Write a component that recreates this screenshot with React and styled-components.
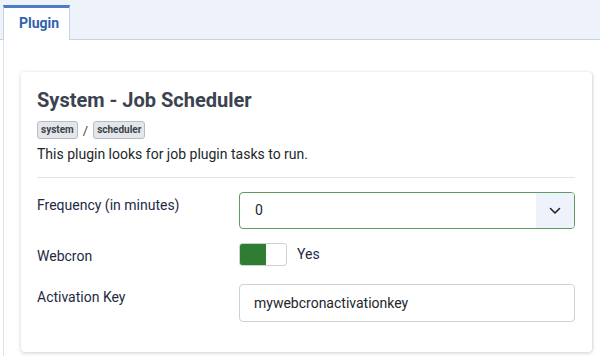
import styled, { createGlobalStyle } from "styled-components";

const GlobalStyle = createGlobalStyle`
  body {
    margin: 0;
    background: #fff;
    font-family: Roboto, "Liberation Sans", sans-serif;
  }
`;

function Chevron() {
  return (
    <svg width="12" height="8" viewBox="0 0 12 8" aria-hidden="true">
      <path d="M1.5 1.5 L6 6 L10.5 1.5" fill="none" stroke="#22262a" strokeWidth="1.6" strokeLinecap="round" strokeLinejoin="round" />
    </svg>
  );
}

export default function App() {
  return (
    <>
      <GlobalStyle />
      <TabBar>
        <Tab>Plugin</Tab>
      </TabBar>
      <Panel>
        <Card>
          <Title>System - Job Scheduler</Title>
          <Badges>
            <Badge>system</Badge>
            <Slash>/</Slash>
            <Badge>scheduler</Badge>
          </Badges>
          <Description>This plugin looks for job plugin tasks to run.</Description>
          <Divider />
          <Form>
            <Row>
              <Label>Frequency (in minutes)</Label>
              <Select $valid>
                <SelectValue>0</SelectValue>
                <SelectArrow>
                  <Chevron />
                </SelectArrow>
              </Select>
            </Row>
            <Row>
              <Label>Webcron</Label>
              <SwitchWrap>
                <Switch>
                  <SwitchOn />
                </Switch>
                <SwitchText>Yes</SwitchText>
              </SwitchWrap>
            </Row>
            <Row>
              <Label>Activation Key</Label>
              <Input>mywebcronactivationkey</Input>
            </Row>
          </Form>
        </Card>
      </Panel>
    </>
  );
}

const TabBar = styled.div`
  display: flex;
  align-items: flex-end;
  height: 39px;
  padding-left: 3px;
  background: #eef2fa;
  border-bottom: 1px solid #c9d2e0;
`;
const Tab = styled.div`
  box-sizing: border-box;
  width: 67px;
  height: 35px;
  margin-bottom: -1px;
  padding: 7px 0 0 15px;
  background: #fff;
  border-top: 3px solid #4a7dc4;
  border-left: 1px solid #c9d2e0;
  border-right: 1px solid #c9d2e0;
  color: #2f64ad;
  font-size: 14px;
  font-weight: 700;
`;
const Panel = styled.div`
  margin-left: 3px;
  border-left: 1px solid #dde3ec;
  padding: 32px 8px 4px 17px;
`;
const Card = styled.div`
  background: #fff;
  border-radius: 4px;
  box-shadow: 0 1px 4px rgba(0, 0, 0, 0.18), 1px 0 2px rgba(0, 0, 0, 0.06);
  padding: 16px 17px 30px 16px;
`;
const Title = styled.h1`
  margin: 0;
  font-size: 20px;
  line-height: 24px;
  font-weight: 700;
  color: #3b4350;
`;
const Badges = styled.div`
  display: flex;
  align-items: center;
  gap: 5px;
  margin-top: 9px;
`;
const Badge = styled.span`
  box-sizing: border-box;
  height: 18px;
  padding: 0 3px;
  line-height: 16px;
  font-size: 10px;
  font-weight: 700;
  color: #3d434a;
  background: #e3e6ea;
  border: 1px solid #b8bdc4;
  border-radius: 3px;
`;
const Slash = styled.span`
  font-size: 13px;
  color: #3d434a;
`;
const Description = styled.p`
  margin: 5px 0 0;
  font-size: 14px;
  line-height: 21px;
  color: #23272b;
`;
const Divider = styled.hr`
  margin: 12px 0 14px;
  border: 0;
  border-top: 1px solid #e2e4e7;
`;
const Form = styled.div`
  display: flex;
  flex-direction: column;
  gap: 14px;
`;
const Row = styled.div`
  display: grid;
  grid-template-columns: 202px 1fr;
  align-items: start;
`;
const Label = styled.div`
  padding-top: 3px;
  font-size: 14px;
  line-height: 21px;
  color: #1e2a44;
`;
const Select = styled.div`
  box-sizing: border-box;
  display: flex;
  height: 37px;
  border: 1px solid ${p => (p.$valid ? "#5f9a62" : "#c9ced3")};
  border-radius: 4px;
  overflow: hidden;
`;
const SelectValue = styled.div`
  flex: 1;
  padding-left: 15px;
  line-height: 35px;
  font-size: 14px;
  color: #22262a;
`;
const SelectArrow = styled.div`
  width: 38px;
  display: flex;
  align-items: center;
  justify-content: center;
  background: #eef2fa;
`;
const SwitchWrap = styled.div`
  display: flex;
  align-items: center;
  gap: 10px;
  height: 27px;
  align-self: start;
`;
const Switch = styled.div`
  box-sizing: border-box;
  display: flex;
  width: 48px;
  height: 23px;
  margin-top: -4px;
  border: 1px solid #cdd2d7;
  border-radius: 3px;
  overflow: hidden;
  background: #fff;
`;
const SwitchOn = styled.div`
  width: 26px;
  background: #2e7d32;
`;
const SwitchText = styled.span`
  margin-top: -6px;
  font-size: 14px;
  color: #1e2a44;
`;
const Input = styled.div`
  box-sizing: border-box;
  height: 38px;
  padding-left: 14px;
  line-height: 36px;
  font-size: 14px;
  color: #22262a;
  border: 1px solid #cdd2d7;
  border-radius: 4px;
`;
